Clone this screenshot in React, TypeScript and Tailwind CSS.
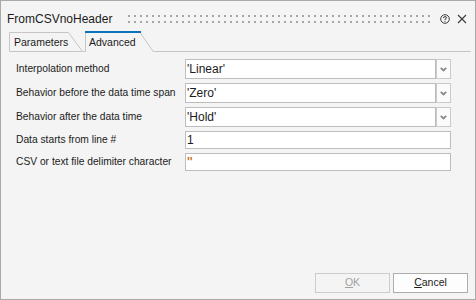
import React from 'react';

const rows: { label: string; value: string; combo: boolean }[] = [
  { label: 'Interpolation method', value: "'Linear'", combo: true },
  { label: 'Behavior before the data time span', value: "'Zero'", combo: true },
  { label: 'Behavior after the data time', value: "'Hold'", combo: true },
  { label: 'Data starts from line #', value: '1', combo: false },
  { label: 'CSV or text file delimiter character', value: "''", combo: false },
];

function Chevron() {
  return (
    <svg width="7" height="5" viewBox="0 0 7 5">
      <polyline points="0.8,0.8 3.5,3.5 6.2,0.8" fill="none" stroke="#8a8a8a" strokeWidth="1.8" />
    </svg>
  );
}

function Grip() {
  return (
    <svg className="flex-1" height="8">
      <defs>
        <pattern id="grip" width="6" height="6" patternUnits="userSpaceOnUse">
          <rect x="0" y="0" width="2" height="2" fill="#a6a6a6" />
        </pattern>
      </defs>
      <rect x="0" y="0" width="100%" height="8" fill="url(#grip)" />
    </svg>
  );
}

export default function App() {
  return (
    <div className="w-[476px] h-[300px] border border-[#a9a9a9] bg-[#f4f4f4] flex flex-col font-['Liberation_Sans',Arial,sans-serif] text-[#1b1b1b]">
      {/* Title bar */}
      <div className="h-[30px] pt-[6px] pl-[6px] pr-[8px] flex items-center">
        <span className="text-[12px] leading-none">FromCSVnoHeader</span>
        <div className="flex-1 ml-[16px] flex">
          <Grip />
        </div>
        <svg className="ml-[8px]" width="10" height="10" viewBox="0 0 10 10">
          <circle cx="5" cy="5" r="4.3" fill="none" stroke="#3a3a3a" strokeWidth="1" />
          <path d="M3.5 4 Q3.5 2.6 5 2.6 Q6.5 2.6 6.5 3.8 Q6.5 4.6 5 5.2 V6" fill="none" stroke="#3a3a3a" strokeWidth="1" />
          <rect x="4.5" y="6.8" width="1" height="1" fill="#3a3a3a" />
        </svg>
        <svg className="ml-[7px]" width="10" height="10" viewBox="0 0 10 10">
          <path d="M1 1 L9 9 M9 1 L1 9" stroke="#3a3a3a" strokeWidth="1.1" />
        </svg>
      </div>

      {/* Tabs */}
      <div className="h-[21px] flex pl-[8px] pr-[4px]">
        <div className="relative w-[74px] h-[21px] flex items-center pl-[5px] pt-[2px]">
          <svg className="absolute inset-0" width="74" height="21">
            <path d="M0.5 20.5 V1.5 H59.5 L73.5 20.5 Z" fill="#f4f4f4" stroke="#c6c6c6" strokeWidth="1" />
          </svg>
          <span className="relative text-[10.5px] leading-none">Parameters</span>
        </div>
        <div className="w-[2px] border-b border-[#c6c6c6]" />
        <div className="relative w-[69px] h-[21px] flex items-center pl-[4px] pt-[2px]">
          <svg className="absolute inset-0" width="69" height="21">
            <path d="M0.5 21 V1.5 M55 1.5 L68.5 21" fill="none" stroke="#c6c6c6" strokeWidth="1" />
            <rect x="0" y="0" width="56" height="2" fill="#0a74b8" />
          </svg>
          <span className="relative text-[10.5px] leading-none">Advanced</span>
        </div>
        <div className="flex-1 border-b border-[#c6c6c6]" />
      </div>

      {/* Form rows */}
      <div className="pt-[7px] pl-[15px] flex flex-col gap-[4px]">
        {rows.map((r) => (
          <div key={r.label} className="flex items-center">
            <div className="w-[169px] text-[10.25px] leading-none whitespace-nowrap">{r.label}</div>
            {r.combo ? (
              <div className="flex h-[20px] w-[266px]">
                <div className="flex-1 border border-[#bdbdbd] bg-white flex items-center pl-[1px] text-[12px] leading-none">
                  {r.value}
                </div>
                <div className="w-[15px] border border-[#cacaca] bg-[#fbfbfb] flex items-center justify-center">
                  <Chevron />
                </div>
              </div>
            ) : (
              <div className="h-[18px] w-[266px] border border-[#bdbdbd] bg-white flex items-center pl-[1px] text-[12px] leading-none">
                {r.value === "''" ? <span className="text-[#c9761e] font-bold">{r.value}</span> : r.value}
              </div>
            )}
          </div>
        ))}
      </div>

      <div className="flex-1" />

      {/* Buttons */}
      <div className="flex justify-end gap-[3px] pr-[7px] pb-[6px]">
        <div className="w-[75px] h-[20px] border border-[#cccccc] bg-[#f4f4f4] flex items-center justify-center text-[10.5px] text-[#a2a2a2]">
          <span className="underline">O</span>K
        </div>
        <div className="w-[75px] h-[20px] border border-[#adadad] bg-[#fdfdfd] flex items-center justify-center text-[10.5px]">
          <span className="underline">C</span>ancel
        </div>
      </div>
    </div>
  );
}
